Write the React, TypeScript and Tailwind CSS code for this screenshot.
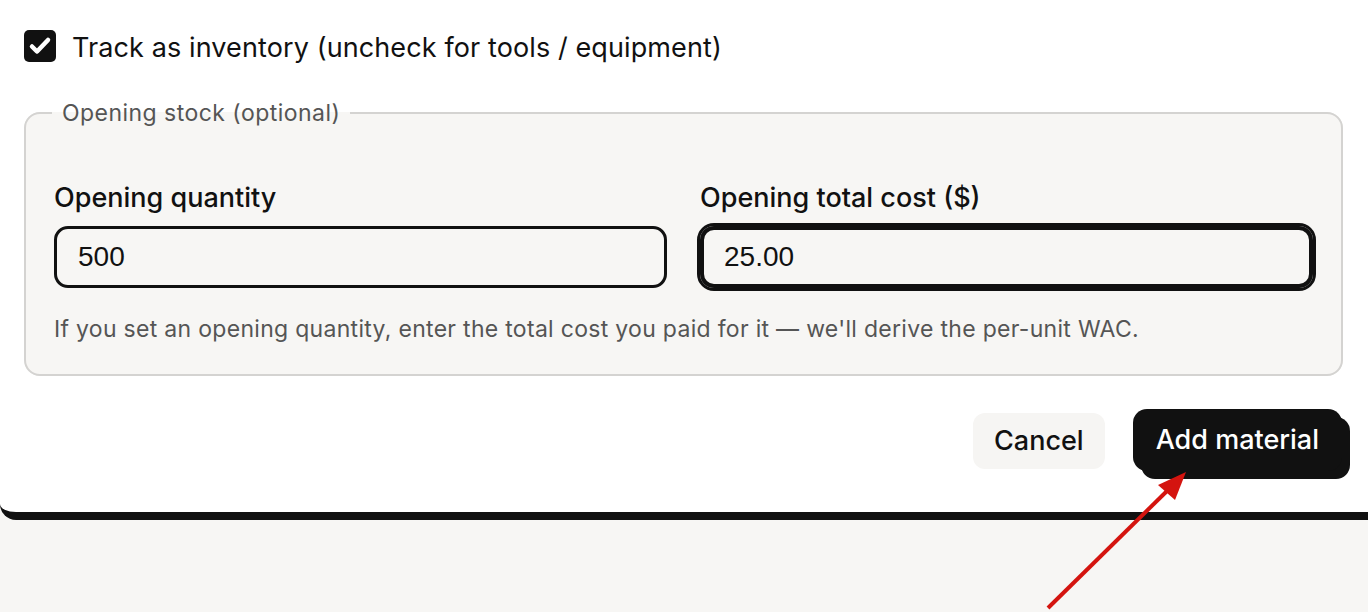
import React from 'react';

const SANS = "font-['Inter','Noto_Sans',sans-serif]";
const MONO_NUM = "font-['Liberation_Sans',Arial,sans-serif]";

export default function App() {
  return (
    <div className={`relative h-[612px] w-full overflow-hidden bg-[#f7f6f4] ${SANS}`}>
      <div className="h-[520px] w-full rounded-bl-[16px] border-b-[8px] border-[#111111] bg-white">
        <div className="px-[24px] pt-[30px]">
          <label className="flex h-[32px] items-center gap-[16px]">
            <span className="flex h-[32px] w-[32px] shrink-0 items-center justify-center rounded-[5px] bg-[#111111]">
              <svg width="24" height="24" viewBox="0 0 24 24" fill="none">
                <path d="M4 12.5l5 5L20 6" stroke="white" strokeWidth="4.5" strokeLinecap="round" strokeLinejoin="round" />
              </svg>
            </span>
            <span className="pt-[4px] text-[27px] leading-[32px] tracking-[0.004em] text-[#111111]">
              Track as inventory (uncheck for tools / equipment)
            </span>
          </label>

          <fieldset className="mt-[34px] w-[1319px] rounded-[16px] border-2 border-[#d4d3d1] bg-[#f7f6f4] px-[28px] pb-[29px] pt-[51px]">
            <legend className="-ml-[2px] px-[10px] text-[23px] leading-[34px] tracking-[0.02em] text-[#555555]">
              Opening stock (optional)
            </legend>
            <div className="grid grid-cols-2 gap-x-[33px]">
              <div className="flex flex-col gap-[11px]">
                <span className="text-[27px] font-medium leading-[34px] text-[#111111]">Opening quantity</span>
                <div className={`box-border flex h-[62px] items-center rounded-[14px] border-[3px] border-[#111111] bg-[#f7f6f4] px-[21px] text-[28px] text-[#111111] ${MONO_NUM}`}>
                  500
                </div>
              </div>
              <div className="flex flex-col gap-[11px]">
                <span className="text-[27px] font-medium leading-[34px] text-[#111111]">Opening total cost ($)</span>
                <div className={`box-border flex h-[62px] items-center rounded-[14px] border-[4px] border-[#111111] bg-[#f7f6f4] px-[20px] text-[28px] text-[#111111] outline-[3px] outline-offset-0 outline-[#111111] outline-solid ${MONO_NUM}`}>
                  25.00
                </div>
              </div>
            </div>
            <p className="mt-[25px] text-[23px] leading-[32px] tracking-[0.013em] text-[#555555]">
              If you set an opening quantity, enter the total cost you paid for it — we'll derive the per-unit WAC.
            </p>
          </fieldset>

          <div className="mt-[37px] flex justify-end gap-[28px] pr-[2px]">
            <button className="h-[56px] rounded-[12px] bg-[#f6f5f3] px-[21px] text-[27px] font-medium text-[#111111]">
              Cancel
            </button>
            <button className="-mt-[4px] h-[62px] rounded-[14px] bg-[#111111] px-[23px] text-[27px] font-medium text-white shadow-[8px_8px_0_#111111]">
              Add material
            </button>
          </div>
        </div>
      </div>

      <svg className="pointer-events-none absolute left-0 top-0" width="1368" height="612">
        <line x1="1048" y1="608" x2="1168" y2="490" stroke="#d4140f" strokeWidth="4" />
        <polygon points="1186,472 1158,485 1175,500" fill="#d4140f" />
      </svg>
    </div>
  );
}
